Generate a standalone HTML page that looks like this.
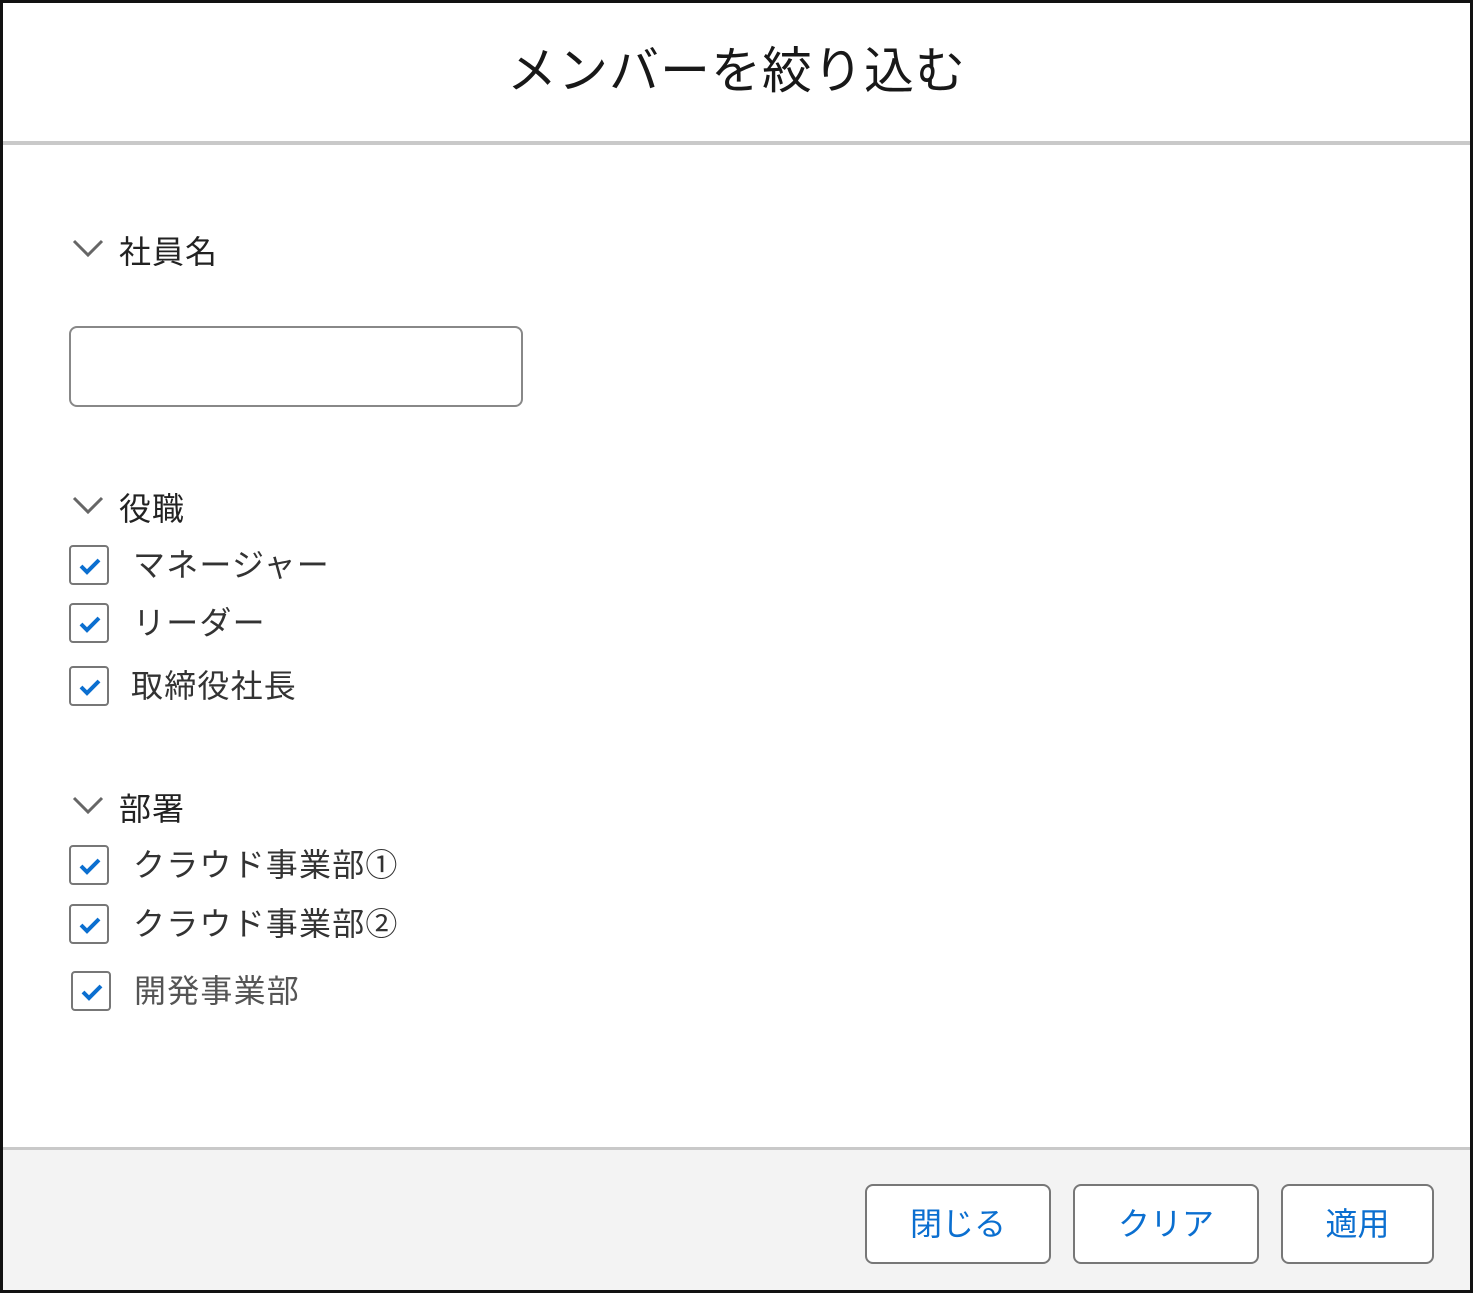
<!DOCTYPE html>
<html><head><meta charset="utf-8"><style>
*{margin:0;padding:0;box-sizing:border-box}
body{width:1473px;height:1293px;background:#fff;font-family:"Liberation Sans","Noto Sans CJK JP",sans-serif;position:relative;overflow:hidden}
.frame{position:absolute;left:0;top:0;width:1473px;height:1293px;border:3px solid #111}
.a{position:absolute}
.title{left:0;width:1473px;top:39px;text-align:center;font-size:50px;letter-spacing:1px;color:#181818;line-height:64px}
.hline{left:3px;right:3px;top:141px;height:4px;background:#c9c9c9}
.footer{left:3px;right:3px;top:1147px;bottom:3px;background:#f3f3f3;border-top:3px solid #c9c9c9}
.lbl{font-size:32px;color:#222;line-height:40px;letter-spacing:1px}
.cb{width:40px;height:40px;border:2px solid #777;border-radius:4px;background:#fff}
.cb svg{position:absolute;left:8px;top:10px}
.it{font-size:32px;color:#333;line-height:40px;letter-spacing:1.2px}
.inp{left:69px;top:326px;width:454px;height:81px;border:2px solid #888;border-radius:8px}
.btn{top:1184px;height:80px;border:2px solid #777;border-radius:8px;background:#fff;color:#0b6fd0;font-size:32px;text-align:center;line-height:76px}
</style></head><body>
<div class="a title">メンバーを絞り込む</div>
<div class="a hline"></div>

<svg class="a" style="left:72px;top:238px" width="32" height="20"><path d="M2 3 L16 17 L30 3" fill="none" stroke="#666" stroke-width="3"/></svg>
<div class="a lbl" style="left:119px;top:232px">社員名</div>
<div class="a inp"></div>

<svg class="a" style="left:72px;top:495px" width="32" height="20"><path d="M2 3 L16 17 L30 3" fill="none" stroke="#666" stroke-width="3"/></svg>
<div class="a lbl" style="left:119px;top:489px">役職</div>

<div class="a cb" style="left:69px;top:545px"><svg width="22" height="18"><path d="M2 9 L8 15 L20 3" fill="none" stroke="#0b6fd0" stroke-width="4"/></svg></div>
<div class="a it" style="left:133px;top:545px">マネージャー</div>
<div class="a cb" style="left:69px;top:603px"><svg width="22" height="18"><path d="M2 9 L8 15 L20 3" fill="none" stroke="#0b6fd0" stroke-width="4"/></svg></div>
<div class="a it" style="left:133px;top:603px">リーダー</div>
<div class="a cb" style="left:69px;top:666px"><svg width="22" height="18"><path d="M2 9 L8 15 L20 3" fill="none" stroke="#0b6fd0" stroke-width="4"/></svg></div>
<div class="a it" style="left:131px;top:666px">取締役社長</div>

<svg class="a" style="left:72px;top:795px" width="32" height="20"><path d="M2 3 L16 17 L30 3" fill="none" stroke="#666" stroke-width="3"/></svg>
<div class="a lbl" style="left:119px;top:789px">部署</div>

<div class="a cb" style="left:69px;top:845px"><svg width="22" height="18"><path d="M2 9 L8 15 L20 3" fill="none" stroke="#0b6fd0" stroke-width="4"/></svg></div>
<div class="a it" style="left:133px;top:845px">クラウド事業部①</div>
<div class="a cb" style="left:69px;top:904px"><svg width="22" height="18"><path d="M2 9 L8 15 L20 3" fill="none" stroke="#0b6fd0" stroke-width="4"/></svg></div>
<div class="a it" style="left:133px;top:904px">クラウド事業部②</div>
<div class="a cb" style="left:71px;top:971px"><svg width="22" height="18"><path d="M2 9 L8 15 L20 3" fill="none" stroke="#0b6fd0" stroke-width="4"/></svg></div>
<div class="a it" style="left:134px;top:971px;color:#555">開発事業部</div>

<div class="a footer"></div>
<div class="a btn" style="left:865px;width:186px">閉じる</div>
<div class="a btn" style="left:1073px;width:186px">クリア</div>
<div class="a btn" style="left:1281px;width:153px">適用</div>
<div class="frame"></div>
</body></html>
